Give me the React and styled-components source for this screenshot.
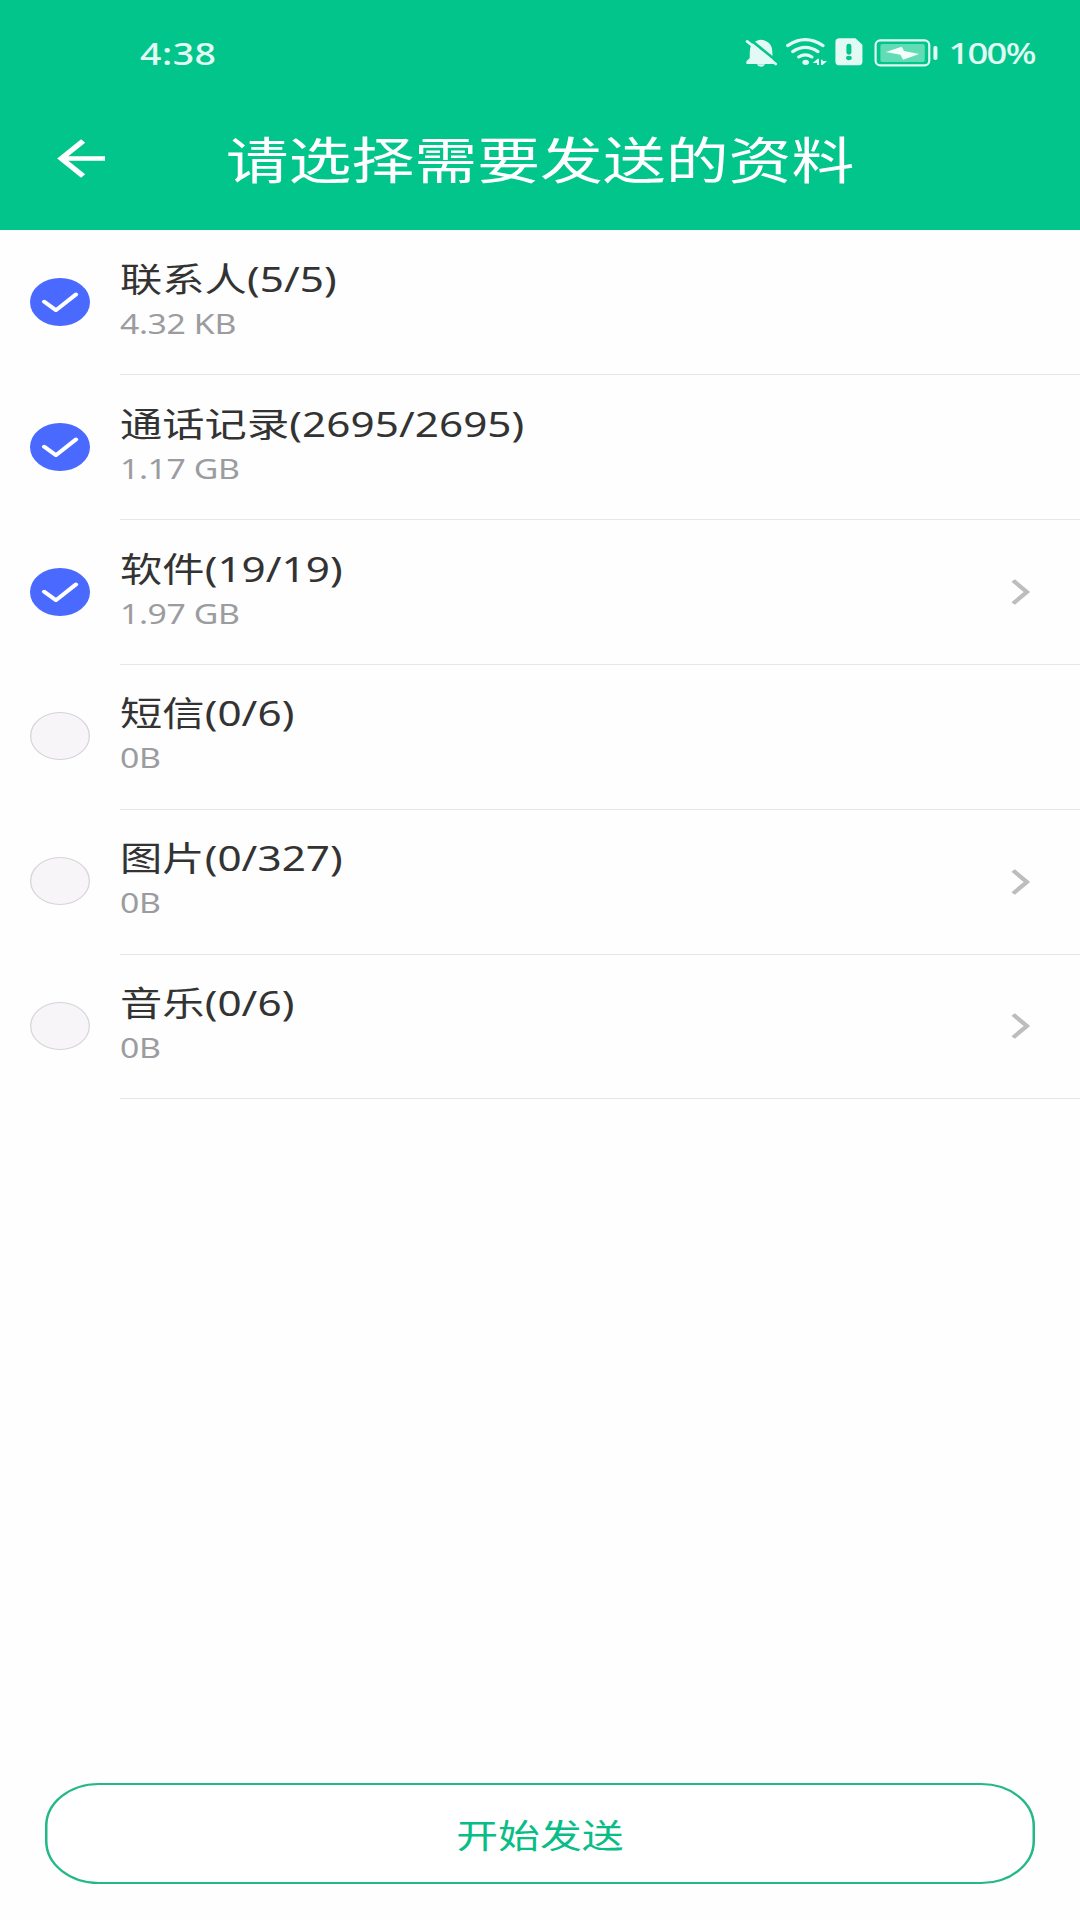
import { useState } from "react"
import styled, { createGlobalStyle } from "styled-components"

const dados = [
    { nome: "联系人", marcados: 5, total: 5, tamanho: "4.32 KB", marcado: true, abre: false },
    { nome: "通话记录", marcados: 2695, total: 2695, tamanho: "1.17 GB", marcado: true, abre: false },
    { nome: "软件", marcados: 19, total: 19, tamanho: "1.97 GB", marcado: true, abre: true },
    { nome: "短信", marcados: 0, total: 6, tamanho: "0B", marcado: false, abre: false },
    { nome: "图片", marcados: 0, total: 327, tamanho: "0B", marcado: false, abre: true },
    { nome: "音乐", marcados: 0, total: 6, tamanho: "0B", marcado: false, abre: true },
]

function Sino() {
    return (
        <Icone largura={28} margem={5.3} viewBox="70 50 105 93" preserveAspectRatio="none">
            <path d="M78 131 V123 L88 113 V96 Q88 68 108 62 Q122 54 136 62 Q156 70 156 96 V113 L162 131 Z" fill="#e2faf3" />
            <path d="M80 50 L176 128" stroke="#02c58b" strokeWidth="8" />
            <path d="M80 63 L166 131" stroke="#e2faf3" strokeWidth="8" strokeLinecap="round" />
            <path d="M109 132 H134 Q131 139 122 139 Q112 139 109 132 Z" fill="#e2faf3" />
        </Icone>
    )
}

function Wifi() {
    return (
        <Icone largura={34} margem={4.7} viewBox="195 50 127.5 93" preserveAspectRatio="none">
            <g fill="none" stroke="#e2faf3" strokeWidth="9.500" strokeLinecap="round">
                <path d="M203 76 Q256 40 309 76" />
                <path d="M218 94 Q256 68 294 94" />
                <path d="M236 110 Q256 97 276 110" />
            </g>
            <ellipse cx="257" cy="126" rx="10" ry="8" fill="#e2faf3" />
            <path d="M278 128 L293 115 H297 V134 H291 V128 Z" fill="#e2faf3" />
            <path d="M303 118 H308 V122 H321 L308 134 H303 Z" fill="#e2faf3" />
        </Icone>
    )
}

function Chip() {
    return (
        <Icone largura={24} margem={8.5} viewBox="340 50 90 93" preserveAspectRatio="none">
            <path d="M357 54 H405 L426 73 V124 Q426 135 413 135 H358 Q345 135 345 124 V65 Q345 54 357 54 Z" fill="#e2faf3" />
            <rect x="378" y="70" width="15" height="33" rx="7" fill="#02c58b" />
            <ellipse cx="385.500" cy="113" rx="8.500" ry="6.500" fill="#02c58b" />
        </Icone>
    )
}

function Bateria() {
    return (
        <Icone largura={52} margem={0} viewBox="462 50 195 93" preserveAspectRatio="none">
            <rect x="467.500" y="60" width="161" height="75" rx="14" fill="none" stroke="#e2faf3" strokeWidth="6.500" />
            <rect x="482" y="71" width="133" height="54" rx="5" fill="#62dcb5" />
            <path d="M498 95 L546 79 L553 92 L598 101 L550 118 L542 103 Z" fill="#f4fffb" />
            <rect x="641" y="77" width="12" height="42" rx="5" fill="#e2faf3" />
        </Icone>
    )
}

function Item(props) {
    const { item } = props
    const [marcado, setMarcado] = useState(item.marcado)

    return (
        <Linha>
            <Marcador marcado={marcado} onClick={() => setMarcado(!marcado)}>
                {marcado && (
                    <svg width="48" height="48" viewBox="0 0 48 48">
                        <path d="M11.300 23.600 L20.700 32.200 L36.800 16.400" fill="none" stroke="#ffffff" strokeWidth="3.600" strokeLinecap="round" strokeLinejoin="round" />
                    </svg>
                )}
            </Marcador>
            <Conteudo>
                <Textos>
                    <Nome>{item.nome}({item.marcados}/{item.total})</Nome>
                    <Tamanho>{item.tamanho}</Tamanho>
                </Textos>
                {item.abre && (
                    <Seta width="16" height="28" viewBox="0 0 16 28">
                        <path d="M1.500 2.500 L12.500 14 L1.500 25.500" fill="none" stroke="#bdbdbd" strokeWidth="3.800" />
                    </Seta>
                )}
            </Conteudo>
        </Linha>
    )
}

export default function App() {
    return (
        <>
            <Global />
            <Tela>
                <Topo>
                    <Status>
                        <Hora>4:38</Hora>
                        <Icones>
                            <Sino />
                            <Wifi />
                            <Chip />
                            <Bateria />
                            <Carga>100%</Carga>
                        </Icones>
                    </Status>
                    <Barra>
                        <Voltar>
                            <svg width="40" height="40" viewBox="0 0 40 40">
                                <path d="M39 20.500 H3.500 M21.500 3 L4 20.500 L21.500 38" fill="none" stroke="#ffffff" strokeWidth="4.600" />
                            </svg>
                        </Voltar>
                        <Titulo>请选择需要发送的资料</Titulo>
                    </Barra>
                </Topo>
                <Lista>
                    {dados.map((item, index) => <Item key={index} item={item} />)}
                </Lista>
                <Rodape>
                    <Enviar>开始发送</Enviar>
                </Rodape>
            </Tela>
        </>
    )
}

const Global = createGlobalStyle`
* {
    box-sizing: border-box;
}
body {
    margin: 0;
    background-color: #fefefe;
    overflow: hidden;
    font-family: "Noto Sans", "Noto Sans CJK SC", sans-serif;
}
`
// the layout is 864 wide and gets stretched to fill 1080
const Tela = styled.div`
width: 864px;
height: 1920px;
display: flex;
flex-direction: column;
background-color: #fefefe;
transform: scaleX(1.25);
transform-origin: 0 0;
`
const Topo = styled.header`
height: 230px;
background-color: #02c58b;
color: #ffffff;
`
const Status = styled.div`
height: 105px;
padding: 0 35px 0 112px;
display: flex;
align-items: center;
justify-content: space-between;
color: #e2faf3;
font-size: 30px;
font-weight: 500;
line-height: 40px;
`
const Hora = styled.span`
padding-top: 2px;
letter-spacing: 0.4px;
`
const Icones = styled.div`
display: flex;
align-items: center;
`
const Icone = styled.svg`
width: ${props => props.largura}px;
height: 31px;
margin-right: ${props => props.margem}px;
`
const Carga = styled.span`
width: 78px;
padding: 1px 1px 0 0;
text-align: right;
font-size: 29px;
letter-spacing: -1.3px;
`
const Barra = styled.div`
height: 106px;
display: grid;
grid-template-columns: 130px 1fr 130px;
align-items: center;
`
const Voltar = styled.button`
height: 40px;
margin-left: 45px;
padding: 0;
display: flex;
background: transparent;
border: none;
cursor: pointer;
`
const Titulo = styled.h1`
margin: 0;
padding-bottom: 3px;
text-align: center;
font-family: "Noto Sans CJK SC", sans-serif;
font-weight: 400;
font-size: 50.3px;
line-height: 60px;
`
const Lista = styled.main`
flex: 1;
padding-top: 0.6px;
`
const Linha = styled.div`
height: 144.800px;
padding-left: 24px;
display: flex;
align-items: center;
gap: 24px;
`
const Marcador = styled.button`
width: 48px;
height: 48px;
margin-bottom: 2px;
padding: 0;
display: flex;
flex-shrink: 0;
border-radius: 50%;
border: ${props => props.marcado ? "none" : "1.5px solid #d6d4d8"};
background-color: ${props => props.marcado ? "#4a69ff" : "#f7f5f8"};
cursor: pointer;
`
const Conteudo = styled.div`
height: 100%;
flex: 1;
padding-right: 39px;
display: flex;
align-items: center;
justify-content: space-between;
border-bottom: 1.5px solid #e6e6e6;
`
const Textos = styled.div`
display: flex;
flex-direction: column;
padding-bottom: 3px;
`
const Nome = styled.span`
color: #333333;
font-size: 33.8px;
line-height: 46px;
letter-spacing: 0.05px;
`
const Tamanho = styled.span`
color: #9c9ca0;
font-size: 27px;
line-height: 44px;
letter-spacing: -0.3px;
`
const Seta = styled.svg`
margin-top: 0;
`
const Rodape = styled.footer`
padding: 0 36px 36px;
`
const Enviar = styled.button`
width: 100%;
height: 101px;
padding: 0 0 1px;
background-color: #ffffff;
border: 2px solid #22b888;
border-radius: 43px;
color: #08bd86;
font-family: "Noto Sans CJK SC", sans-serif;
font-size: 33.5px;
cursor: pointer;
`
